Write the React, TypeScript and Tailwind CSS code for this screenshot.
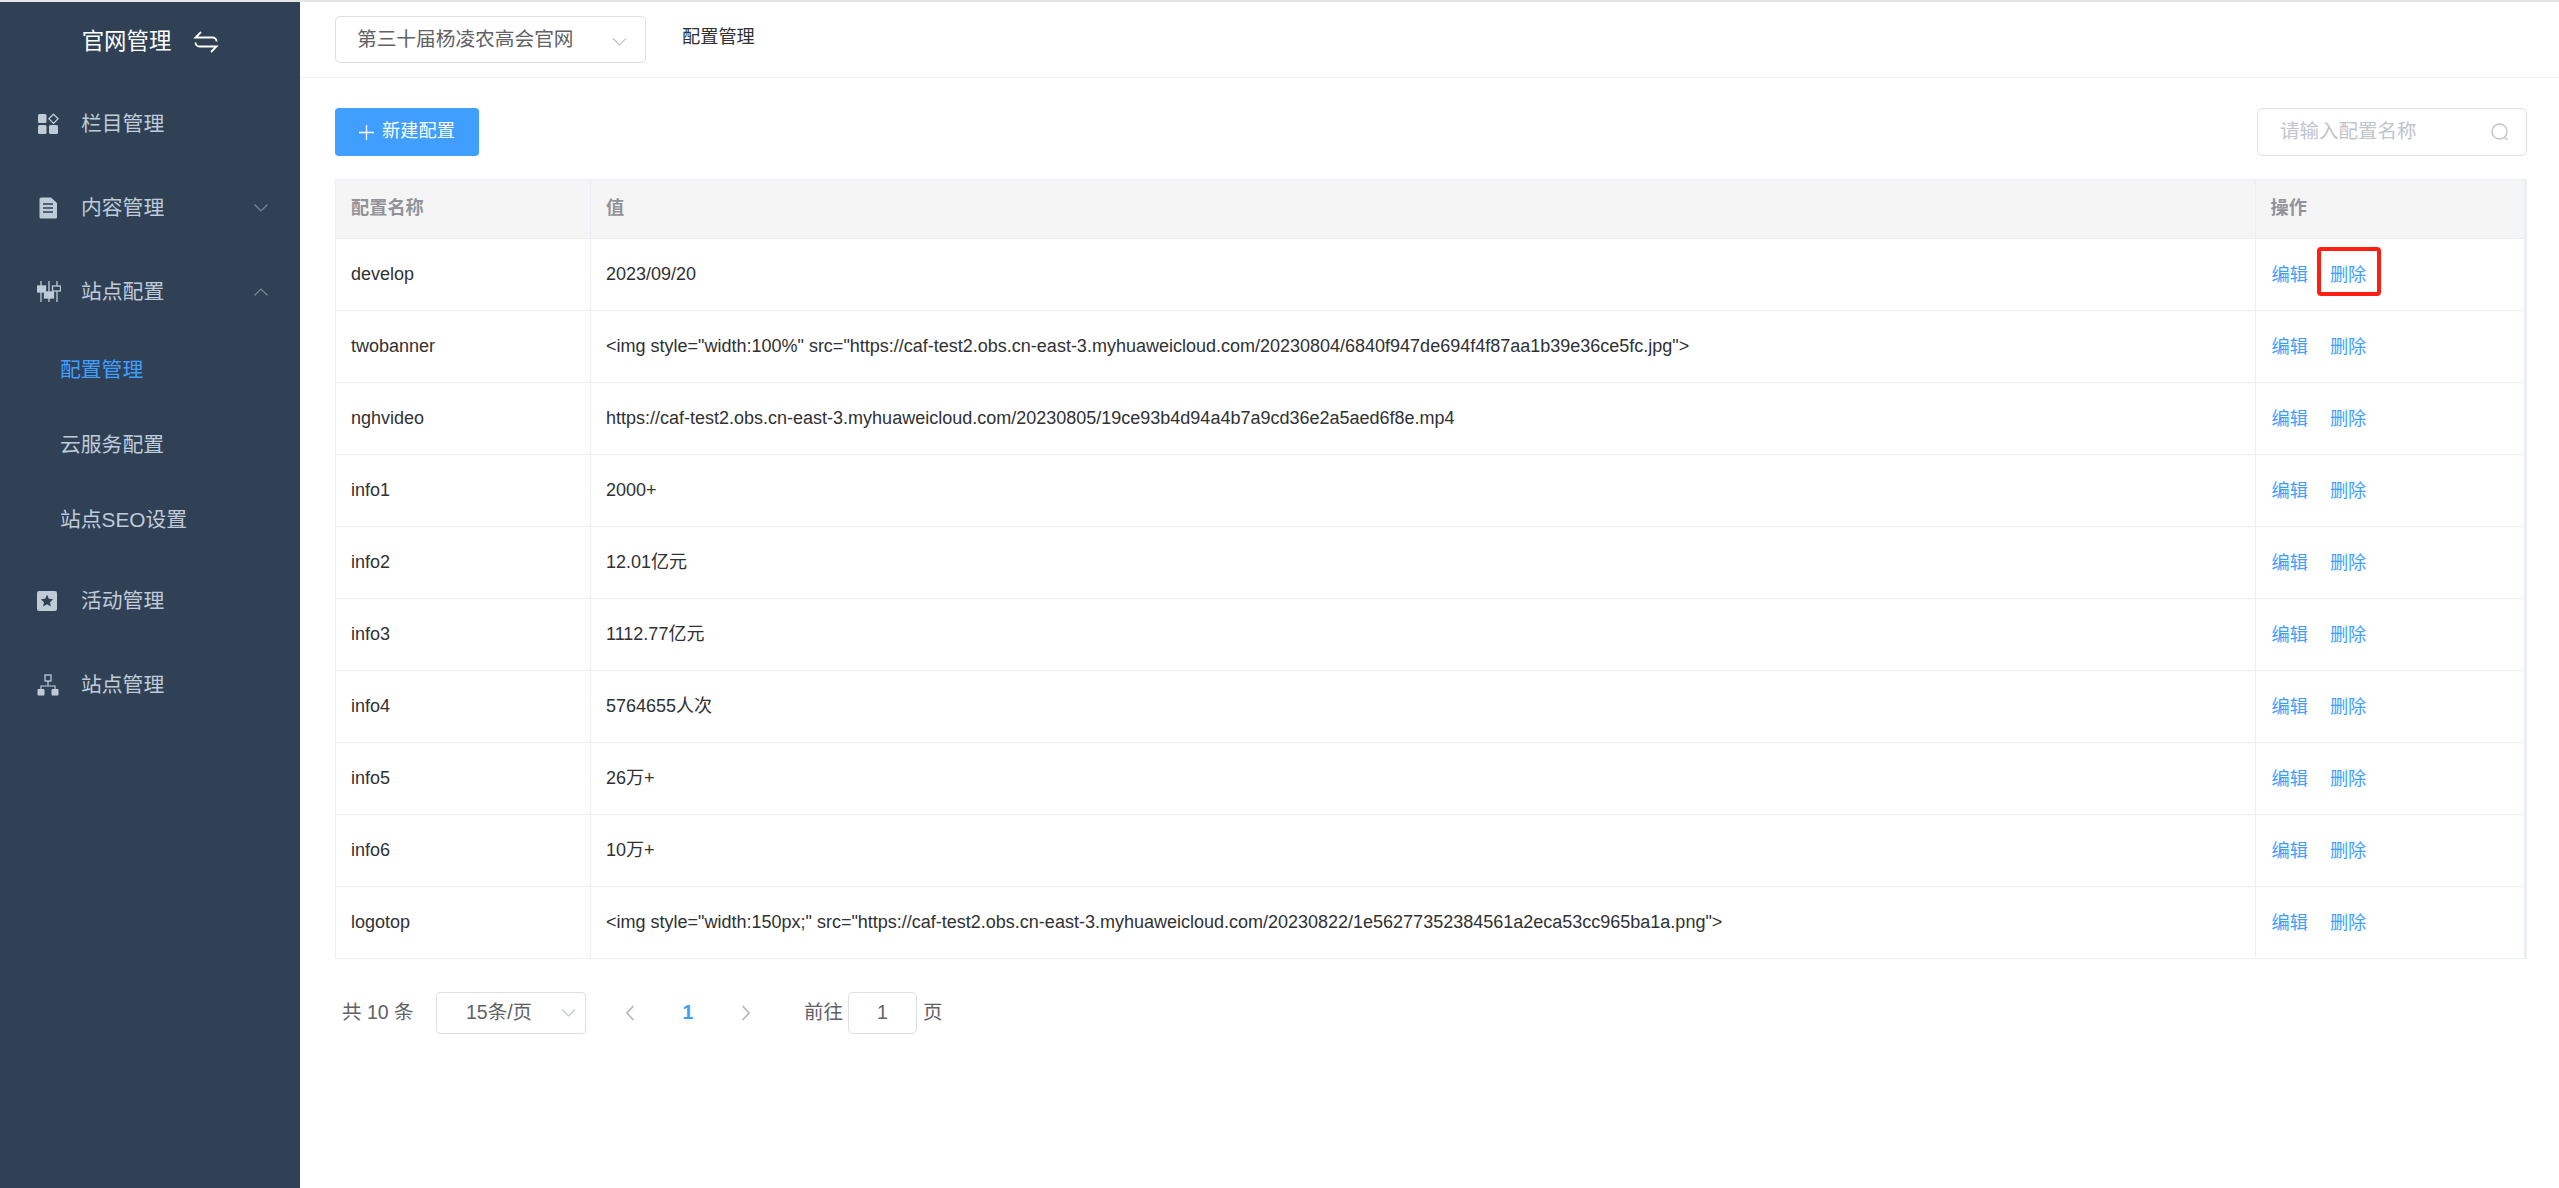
import React from 'react';

const FONT = "font-['Liberation_Sans','Noto_Sans_CJK_SC',sans-serif]";

const rows = [
  { name: 'develop', value: '2023/09/20' },
  { name: 'twobanner', value: '<img style="width:100%" src="https://caf-test2.obs.cn-east-3.myhuaweicloud.com/20230804/6840f947de694f4f87aa1b39e36ce5fc.jpg">' },
  { name: 'nghvideo', value: 'https://caf-test2.obs.cn-east-3.myhuaweicloud.com/20230805/19ce93b4d94a4b7a9cd36e2a5aed6f8e.mp4' },
  { name: 'info1', value: '2000+' },
  { name: 'info2', value: '12.01亿元' },
  { name: 'info3', value: '1112.77亿元' },
  { name: 'info4', value: '5764655人次' },
  { name: 'info5', value: '26万+' },
  { name: 'info6', value: '10万+' },
  { name: 'logotop', value: '<img style="width:150px;" src="https://caf-test2.obs.cn-east-3.myhuaweicloud.com/20230822/1e56277352384561a2eca53cc965ba1a.png">' },
];

const Chevron = ({ up = false, className = '' }: { up?: boolean; className?: string }) => (
  <svg viewBox="0 0 14 8" fill="none" stroke="currentColor" strokeWidth="1.2" className={className}>
    <path d={up ? 'M0.5 7.5L7 1l6.5 6.5' : 'M0.5 0.5L7 7l6.5-6.5'} />
  </svg>
);

const GridIcon = () => (
  <svg viewBox="0 0 22 22" fill="currentColor" className="w-[22px] h-[22px]">
    <rect x="1" y="1" width="8.5" height="9" rx="1.5" />
    <rect x="1" y="12" width="8.5" height="9" rx="1.5" />
    <rect x="12" y="12" width="9" height="9" rx="1.5" />
    <path d="M16.5 1.2l4.6 4.6-4.6 4.6-4.6-4.6z" fill="none" stroke="currentColor" strokeWidth="1.3" />
  </svg>
);

const DocIcon = () => (
  <svg viewBox="0 0 22 22" className="w-[22px] h-[22px]">
    <path d="M4 0.5h10l6 5.5v14a1.5 1.5 0 0 1-1.5 1.5h-14.5a1.5 1.5 0 0 1-1.5-1.5v-18a1.5 1.5 0 0 1 1.5-1.5z" fill="currentColor" />
    <path d="M6 7h10M6 11h10M6 15h10" stroke="#304156" strokeWidth="1.4" />
  </svg>
);

const SlidersIcon = () => (
  <svg viewBox="0 0 24 22" fill="none" stroke="currentColor" strokeWidth="1.3" className="w-[24px] h-[22px]">
    <path d="M4 0v21M12 0v21M20 0v21" />
    <rect x="0.5" y="5" width="8" height="6" fill="currentColor" />
    <rect x="7.5" y="11" width="9" height="6" fill="currentColor" />
    <rect x="15.5" y="5" width="8" height="5" fill="#304156" />
  </svg>
);

const StarIcon = () => (
  <svg viewBox="0 0 20 20" className="w-[20px] h-[20px]">
    <rect width="20" height="20" rx="2" fill="currentColor" />
    <path d="M10 3.8l1.9 4 4.3.5-3.2 2.9.9 4.3-3.9-2.2-3.9 2.2.9-4.3-3.2-2.9 4.3-.5z" fill="#304156" />
  </svg>
);

const TreeIcon = () => (
  <svg viewBox="0 0 22 22" className="w-[22px] h-[22px]">
    <rect x="8" y="1" width="6" height="6" fill="none" stroke="currentColor" strokeWidth="1.3" />
    <path d="M11 7v5M4 15v-3h14v3" fill="none" stroke="currentColor" strokeWidth="1.2" />
    <rect x="0.5" y="15" width="7" height="6.5" rx="1" fill="currentColor" />
    <rect x="14.5" y="15" width="7" height="6.5" rx="1" fill="currentColor" />
  </svg>
);

const MenuItem = ({ icon, label, arrow }: { icon: React.ReactNode; label: string; arrow?: 'up' | 'down' }) => (
  <div className="h-[84px] flex items-center pl-[37px] pr-[32px] text-[20.8px] text-[#bfcbd9]">
    <span className="w-[44px] flex items-center">{icon}</span>
    <span className="flex-1">{label}</span>
    {arrow && <Chevron up={arrow === 'up'} className="w-[14px] h-[8px] text-[#7a8694]" />}
  </div>
);

const SubItem = ({ label, active = false }: { label: string; active?: boolean }) => (
  <div className={`h-[75px] flex items-center pl-[60px] pb-[3px] text-[20.8px] ${active ? 'text-[#409eff]' : 'text-[#bfcbd9]'}`}>
    {label}
  </div>
);

const Sidebar = () => (
  <aside className="w-[300px] shrink-0 bg-[#304156]">
    <div className="h-[80px] flex items-center justify-center gap-[22px] pl-[1px] text-white">
      <span className="text-[22.4px]">官网管理</span>
      <svg viewBox="0 0 26 24" fill="none" stroke="currentColor" strokeWidth="1.8" className="w-[26px] h-[24px]">
        <path d="M8 2L2.5 7.5h17a4 4 0 0 1 4 4" />
        <path d="M18 22l5.5-5.5h-17a4 4 0 0 1-4-4" />
      </svg>
    </div>
    <MenuItem icon={<GridIcon />} label="栏目管理" />
    <MenuItem icon={<DocIcon />} label="内容管理" arrow="down" />
    <MenuItem icon={<SlidersIcon />} label="站点配置" arrow="up" />
    <SubItem label="配置管理" active />
    <SubItem label="云服务配置" />
    <SubItem label="站点SEO设置" />
    <MenuItem icon={<StarIcon />} label="活动管理" />
    <MenuItem icon={<TreeIcon />} label="站点管理" />
  </aside>
);

const Header = () => (
  <header className="h-[75px] flex items-center pl-[35px] border-b border-[#f0f0f0] box-content">
    <div className="w-[311px] h-[47px] flex items-center justify-between pl-[21px] pr-[18px] border border-[#dcdfe6] rounded-[5px] text-[19.7px] text-[#606266]">
      <span>第三十届杨凌农高会官网</span>
      <Chevron className="w-[15px] h-[8px] text-[#c0c4cc] mt-[4px]" />
    </div>
    <span className="ml-[36px] text-[18.2px] text-[#303133] -mt-[3px]">配置管理</span>
  </header>
);

const ConfigTable = () => (
  <div className="border-r-[3px] border-[#ebeef5]">
    <table className="w-full table-fixed border-collapse text-[18px] text-[#303133]">
      <colgroup>
        <col className="w-[255px]" />
        <col />
        <col className="w-[269px]" />
      </colgroup>
      <thead>
        <tr className="h-[59px] bg-[#f5f5f6] text-[#909399] text-left text-[18.2px]">
          <th className="border border-[#ebeef5] px-[15px] font-bold">配置名称</th>
          <th className="border border-[#ebeef5] px-[15px] font-bold">值</th>
          <th className="border border-[#ebeef5] border-r-0 px-[15px] font-bold">操作</th>
        </tr>
      </thead>
      <tbody>
        {rows.map((row, i) => (
          <tr key={row.name} className="h-[72px]">
            <td className="border border-[#ebeef5] px-[15px]">{row.name}</td>
            <td className="border border-[#ebeef5] px-[15px]">{row.value}</td>
            <td className="border border-[#ebeef5] border-r-0 px-[15px] text-[#409eff] text-[18.2px]">
              <div className="flex gap-[22px] pl-[1px] mt-[2px]">
                <span>编辑</span>
                <span className="relative">
                  删除
                  {/* 红框标注 */}
                  {i === 0 && (
                    <span className="absolute -left-[13px] -top-[15px] w-[64px] h-[49px] border-[4px] border-[#ff2013] rounded-[4px]" />
                  )}
                </span>
              </div>
            </td>
          </tr>
        ))}
      </tbody>
    </table>
  </div>
);

const Pagination = () => (
  <div className="mt-[33px] flex items-center h-[42px] text-[19.5px] text-[#606266]">
    <span className="ml-[7px] w-[94px]">共 10 条</span>
    <div className="w-[150px] h-[42px] flex items-center justify-between pl-[29px] pr-[9px] border border-[#dcdfe6] rounded-[4px]">
      <span>15条/页</span>
      <Chevron className="w-[15px] h-[8px] text-[#c0c4cc]" />
    </div>
    <svg viewBox="0 0 10 18" fill="none" stroke="#b4b9c2" strokeWidth="1.8" className="ml-[39px] w-[10px] h-[16px]">
      <path d="M9 1L1.5 9 9 17" />
    </svg>
    <span className="w-[106px] text-center font-bold text-[#409eff]">1</span>
    <svg viewBox="0 0 10 18" fill="none" stroke="#b4b9c2" strokeWidth="1.8" className="w-[10px] h-[16px]">
      <path d="M1 1l7.5 8L1 17" />
    </svg>
    <span className="ml-[53px]">前往</span>
    <div className="ml-[5px] w-[69px] h-[42px] flex items-center justify-center border border-[#dcdfe6] rounded-[5px]">1</div>
    <span className="ml-[6px]">页</span>
  </div>
);

const App: React.FC = () => {
  return (
    <div className={`h-[1188px] flex flex-col overflow-hidden bg-white ${FONT}`}>
      <div className="h-[2px] shrink-0 bg-[#e4e4e4]" />
      <div className="flex flex-1 min-h-0">
        <Sidebar />
        <main className="flex-1 min-w-0">
          <Header />
          <section className="pt-[30px] pl-[35px] pr-[32px]">
            <div className="flex justify-between mb-[23px]">
              <button className="w-[144px] h-[48px] flex items-center justify-center gap-[8px] bg-[#409eff] rounded-[4px] text-white text-[18.2px]">
                <svg viewBox="0 0 16 16" stroke="currentColor" strokeWidth="1.4" className="w-[15px] h-[15px]">
                  <path d="M8 0v16M0 8h16" />
                </svg>
                新建配置
              </button>
              <div className="w-[270px] h-[48px] flex items-center justify-between pl-[22px] pr-[17px] border border-[#dcdfe6] rounded-[5px] text-[19.5px] text-[#c0c4cc]">
                <span>请输入配置名称</span>
                <svg viewBox="0 0 18 18" fill="none" stroke="currentColor" strokeWidth="1.4" className="w-[18px] h-[18px]">
                  <circle cx="8.5" cy="8.5" r="7.5" />
                  <path d="M13.5 14l3 3" />
                </svg>
              </div>
            </div>
            <ConfigTable />
            <Pagination />
          </section>
        </main>
      </div>
    </div>
  );
};

export default App;
